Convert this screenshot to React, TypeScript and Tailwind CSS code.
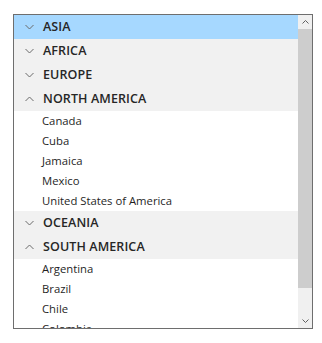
import React from 'react';

const groups = [
  { name: 'ASIA', open: false, selected: true, items: [] as string[] },
  { name: 'AFRICA', open: false, items: [] },
  { name: 'EUROPE', open: false, items: [] },
  { name: 'NORTH AMERICA', open: true, items: ['Canada', 'Cuba', 'Jamaica', 'Mexico', 'United States of America'] },
  { name: 'OCEANIA', open: false, items: [] },
  { name: 'SOUTH AMERICA', open: true, items: ['Argentina', 'Brazil', 'Chile', 'Colombia'] },
];

function Chevron({ up }: { up?: boolean }) {
  return (
    <svg width="9" height="6" viewBox="0 0 9 6" className="shrink-0">
      <path
        d={up ? 'M0.5 5 L4.5 1 L8.5 5' : 'M0.5 1 L4.5 5 L8.5 1'}
        fill="none"
        stroke="#6b6b6b"
        strokeWidth="1"
      />
    </svg>
  );
}

export default function App() {
  return (
    <div className="w-[322px] h-[343px] bg-white pt-[14px] pl-[13px]" style={{ fontFamily: '"Open Sans", "Noto Sans", sans-serif' }}>
      <div className="w-[300px] h-[315px] border border-[#6e6e6e] flex">
        <div className="flex-1 overflow-hidden">
          {groups.map((g) => (
            <div key={g.name}>
              <div className={`h-[24px] flex items-center pl-[11px] gap-[9px] ${g.selected ? 'bg-[#a6d8ff]' : 'bg-[#f1f1f1]'}`}>
                <Chevron up={g.open} />
                <span className="text-[12.5px] font-semibold text-[#262626] tracking-[0.1px]">{g.name}</span>
              </div>
              {g.open &&
                g.items.map((it) => (
                  <div key={it} className="h-[20px] flex items-center pl-[28px] text-[11.3px] text-[#1f1f1f]">
                    {it}
                  </div>
                ))}
            </div>
          ))}
        </div>
        <div className="w-[14px] bg-[#f0f0f0] flex flex-col">
          <div className="h-[14px] flex items-center justify-center">
            <svg width="7" height="4" viewBox="0 0 7 4">
              <path d="M0.5 3.5 L3.5 0.5 L6.5 3.5" fill="none" stroke="#606060" strokeWidth="1" />
            </svg>
          </div>
          <div className="h-[259px] bg-[#cdcdcd]" />
          <div className="flex-1" />
          <div className="h-[14px] flex items-center justify-center">
            <svg width="7" height="4" viewBox="0 0 7 4">
              <path d="M0.5 0.5 L3.5 3.5 L6.5 0.5" fill="none" stroke="#606060" strokeWidth="1" />
            </svg>
          </div>
        </div>
      </div>
    </div>
  );
}
